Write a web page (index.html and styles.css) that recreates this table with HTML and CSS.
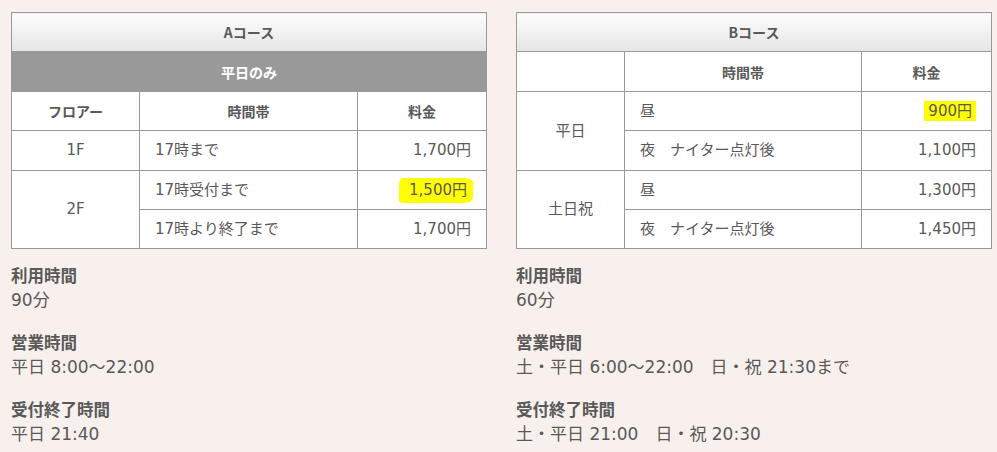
FILE: index.html
```html
<!DOCTYPE html>
<html lang="ja">
<head>
<meta charset="utf-8">
<link rel="stylesheet" href="styles.css">
</head>
<body>
<div class="page">
  <section class="course">
    <table class="price">
      <colgroup><col class="c1a"><col class="c2a"><col class="c3a"></colgroup>
      <tr><th colspan="3" class="title">Aコース</th></tr>
      <tr><th colspan="3" class="sub">平日のみ</th></tr>
      <tr><th>フロアー</th><th>時間帯</th><th>料金</th></tr>
      <tr><td class="center">1F</td><td>17時まで</td><td class="num">1,700円</td></tr>
      <tr class="split"><td class="center" rowspan="2">2F</td><td>17時受付まで</td><td class="num"><span class="mark brush">1,500円</span></td></tr>
      <tr><td>17時より終了まで</td><td class="num">1,700円</td></tr>
    </table>
    <dl class="info">
      <dt>利用時間</dt><dd>90分</dd>
      <dt>営業時間</dt><dd>平日 8:00～22:00</dd>
      <dt>受付終了時間</dt><dd>平日 21:40</dd>
    </dl>
  </section>
  <section class="course">
    <table class="price">
      <colgroup><col class="c1b"><col class="c2b"><col class="c3b"></colgroup>
      <tr><th colspan="3" class="title">Bコース</th></tr>
      <tr><th></th><th>時間帯</th><th>料金</th></tr>
      <tr class="split"><td class="center" rowspan="2">平日</td><td>昼</td><td class="num"><span class="mark">900円</span></td></tr>
      <tr><td>夜　ナイター点灯後</td><td class="num">1,100円</td></tr>
      <tr class="split"><td class="center" rowspan="2">土日祝</td><td>昼</td><td class="num">1,300円</td></tr>
      <tr><td>夜　ナイター点灯後</td><td class="num">1,450円</td></tr>
    </table>
    <dl class="info">
      <dt>利用時間</dt><dd>60分</dd>
      <dt>営業時間</dt><dd>土・平日 6:00～22:00　日・祝 21:30まで</dd>
      <dt>受付終了時間</dt><dd>土・平日 21:00　日・祝 20:30</dd>
    </dl>
  </section>
</div>
</body>
</html>
```
FILE: styles.css
```css
html, body {
  margin: 0;
  padding: 0;
  background: #f8f0ed;
}
body {
  font-family: "DejaVu Sans", "Noto Sans CJK JP", sans-serif;
  color: #595959;
}
.page {
  display: flex;
  gap: 30px;
  padding: 12px 7px 0 11px;
}
.course {
  width: 475px;
  flex: none;
}
.price {
  width: 475px;
  border-collapse: collapse;
  table-layout: fixed;
  background: #fff;
  font-size: 15px;
}
.c1a { width: 128px; }
.c2a { width: 218px; }
.c3a { width: 129px; }
.c1b { width: 108px; }
.c2b { width: 237px; }
.c3b { width: 130px; }
.price th, .price td {
  border: 1px solid #999;
  height: 39.4px;
  padding: 0 15px;
  box-sizing: border-box;
  line-height: 20px;
}
.price th {
  font-weight: bold;
  font-size: 14px;
  text-align: center;
  font-family: "Noto Sans CJK JP", sans-serif;
}
.price th.title {
  background: linear-gradient(#fdfdfd, #e5e5e5);
}
.price th.sub {
  background: #999;
  color: #fff;
}
.price td.center { text-align: center; }
.price td.num { text-align: right; }
.price tr.split td:not([rowspan]) {
  border-bottom: 1px dashed #999;
}
.mark {
  background: #ffff00;
  padding: 1px 4px;
}
.mark.brush {
  padding: 3px 6px 4px 10px;
  margin-right: -2px;
  border-radius: 3px 10px 8px 4px / 8px 4px 6px 3px;
}
.info {
  margin: 14px 0 0;
  font-size: 17px;
  line-height: 25px;
}
.info dt {
  font-weight: bold;
  font-size: 16.5px;
  font-family: "Noto Sans CJK JP", sans-serif;
}
.info dd {
  margin: 0 0 17px;
}
```
